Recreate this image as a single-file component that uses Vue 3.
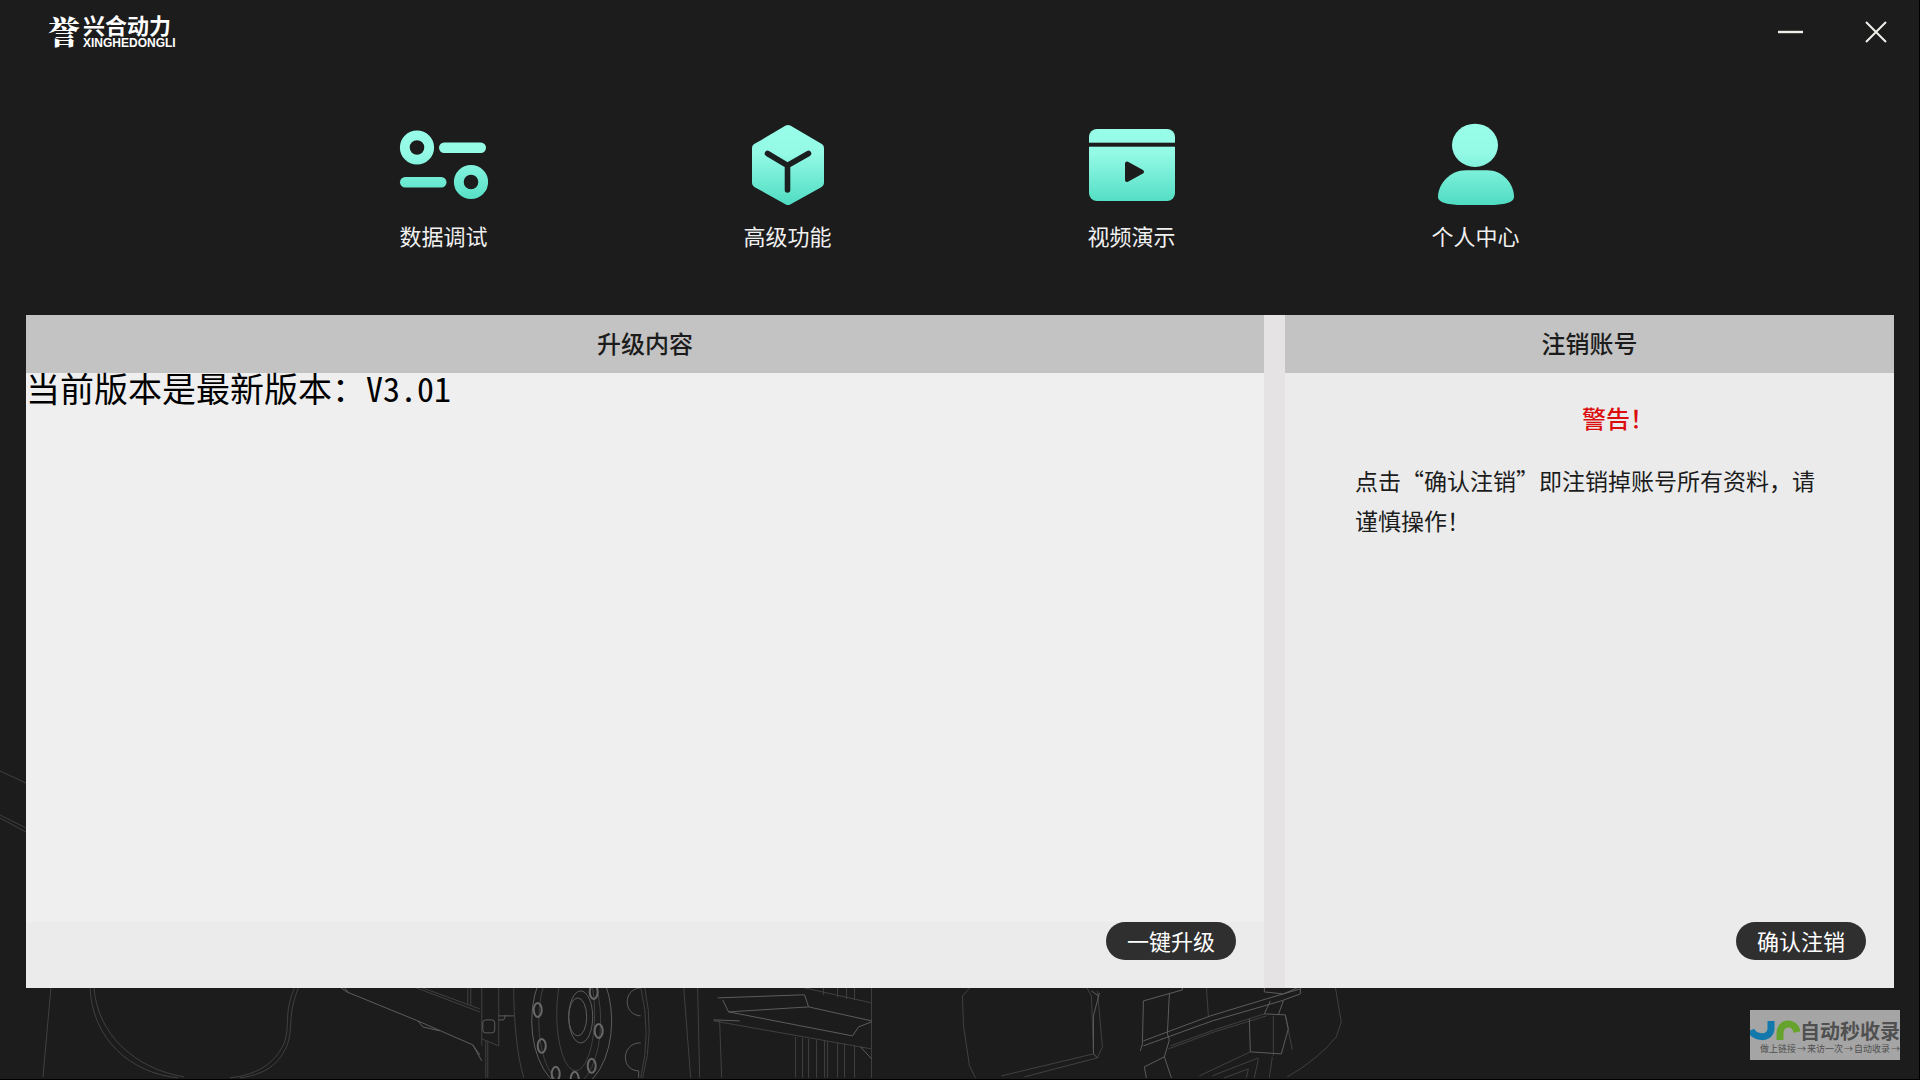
<script setup>
const bolts = [
  [594, 173], [599, 212], [592, 247], [556, 255], [542, 227], [538, 191], [575, 260],
]
const grille = [796, 803, 809, 817, 825, 828, 838, 845, 855]
const grilleTop = [824, 838, 847, 855]
const watermarkSteps = ['做上链接', '→', '来访一次', '→', '自动收录', '→']
</script>

<template>
  <div class="app">
    <svg class="truck" viewBox="0 0 1920 260" aria-hidden="true">
      <g class="faint">
        <path d="M0 -48L26 -36M0 -4L26 9M0 -1L26 13M51 168L43 258" />
        <path d="M90 168C92 220 130 254 178 259M94 168C97 216 136 250 184 258M295 168C283 196 291 206 284 225C274 246 256 256 230 259M299 168C287 196 294 208 287 227C278 248 262 256 240 259" />
        <path d="M414 168L480 193M420 168L480 190M468 168V186M471 168V186M482 168V227M499 168V227L482 220M486 222V259M488 222V259" />
        <path d="M514 168C514 200 517 236 524 259M641 168Q652 214 641 259M645 168Q655 214 643 259" />
        <ellipse cx="570" cy="202" rx="31" ry="66" />
        <ellipse cx="576" cy="195" rx="19" ry="57" />
        <path d="M684 168L691 259M698 168L700 259M714 202L872 230M720 202L722 259M872 168V259M805 169L872 184" />
        <path v-for="x in grille" :key="x" :d="`M${x} ${218 + (x - 796) / 7}V259`" />
        <path v-for="x in grilleTop" :key="'t' + x" :d="`M${x} 168V${173 + (x - 805) / 6}`" />
        <path d="M971 168L963 177L964 207L970 247L976 259M1087 168L1092 177L1094 233M1098 172L1103 228L1098 239L1025 258M1094 235L1002 257" />
        <path d="M1207 168L1209 197M1169 230L1215 213L1267 197M1171 227L1215 211L1265 195M1274 197V237M1286 196L1293 231" />
        <path d="M1336 168L1342 203L1337 218Q1318 241 1288 258" />
        <path d="M1251 233L1200 257M1259 239L1213 257M1249 250L1225 259M1249 250L1247 259M1273 238L1270 259M1259 240L1255 259" />
      </g>
      <g class="bright">
        <path d="M340 168L347 173L418 202L473 226L482 242M344 168L349 174M418 202L423 208L440 212M473 226L480 236" />
        <rect x="483" y="201" width="12" height="13" rx="3" />
        <path d="M499 197H514M499 201H504L506 196" />
        <ellipse cx="572" cy="202" rx="40" ry="68" />
        <ellipse cx="578" cy="198" rx="9" ry="19" />
        <ellipse cx="581" cy="198" rx="12" ry="26" />
        <path d="M641 169C623 170 623 196 641 197M641 224C621 224 621 252 639 252V259" />
        <path d="M714 201L740 202M718 179L801 176L805 176L809 188L872 202M723 181L729 193L853 217L859 208L872 203M729 193L809 188M861 228L872 240" />
        <path d="M1100 174L1094 197V235L1098 239M1092 172L1099 177" />
        <path d="M1183 168V171L1144 182L1143 225L1141 232M1170 175L1168 215L1170 221L1165 238L1145 248L1147 259M1165 238L1172 259" />
        <path d="M1144 222L1211 197L1267 180L1301 170M1144 227L1213 202L1282 182L1301 175V168M1265 168V173L1284 175L1300 168M1271 182L1265 195L1286 196L1289 210L1282 235L1251 233L1250 200M1284 182L1279 196" />
      </g>
      <ellipse v-for="([x, y], i) in bolts" :key="i" class="bolt" :cx="x" :cy="y" rx="4" ry="7" />
    </svg>

    <header class="titlebar">
      <div class="brand">
        <span class="emblem">誉</span>
        <div class="brand-text">
          <span class="brand-cn">兴合动力</span>
          <span class="brand-en">XINGHEDONGLI</span>
        </div>
      </div>
      <div class="window-controls">
        <button type="button" aria-label="最小化">
          <svg width="26" height="26" viewBox="0 0 26 26"><path d="M0 13H25" stroke-width="2.4" /></svg>
        </button>
        <button type="button" aria-label="关闭">
          <svg width="26" height="26" viewBox="0 0 26 26"><path d="M3 3L23 23M23 3L3 23" stroke-width="2" /></svg>
        </button>
      </div>
    </header>

    <nav class="menu">
      <a href="#data" class="menu-item">
        <svg viewBox="0 0 96 88" class="menu-icon">
          <defs>
            <linearGradient id="mint" gradientUnits="userSpaceOnUse" x1="0" y1="4" x2="0" y2="84">
              <stop offset="0" stop-color="#98fee9" />
              <stop offset="0.35" stop-color="#94fae6" />
              <stop offset="1" stop-color="#4fdcc2" />
            </linearGradient>
          </defs>
          <circle cx="21" cy="26.5" r="12.2" fill="none" stroke="url(#mint)" stroke-width="9.8" />
          <rect x="43" y="21.5" width="47" height="10.5" rx="5.2" fill="url(#mint)" />
          <circle cx="75" cy="61" r="12.2" fill="none" stroke="url(#mint)" stroke-width="9.8" />
          <rect x="4" y="56" width="46.5" height="10.5" rx="5.2" fill="url(#mint)" />
        </svg>
        <span>数据调试</span>
      </a>
      <a href="#advanced" class="menu-item">
        <svg viewBox="0 0 96 88" class="menu-icon">
          <path d="M48 8.5L79.5 27V62L48 79.5L16.500 62V27Z" fill="url(#mint)" stroke="url(#mint)" stroke-width="9" stroke-linejoin="round" />
          <path d="M27.5 32.5L47.5 44.5L68.5 32.5M47.5 44.5V69" fill="none" stroke="#1b1f1f" stroke-width="5.6" stroke-linecap="round" />
        </svg>
        <span>高级功能</span>
      </a>
      <a href="#video" class="menu-item">
        <svg viewBox="0 0 96 88" class="menu-icon">
          <rect x="5" y="8" width="86" height="72" rx="8" fill="url(#mint)" />
          <rect x="5" y="21.7" width="86" height="4" fill="#1c1c1c" />
          <path d="M43 42.5L58 50.7L43 59Z" fill="#1c1c1c" stroke="#1c1c1c" stroke-width="4" stroke-linejoin="round" />
        </svg>
        <span>视频演示</span>
      </a>
      <a href="#profile" class="menu-item">
        <svg viewBox="0 0 96 88" class="menu-icon">
          <ellipse cx="47" cy="24.3" rx="23" ry="21.6" fill="url(#mint)" />
          <path d="M38 49.3H59C75 49.3 86 63 86 76C86 82 74 84 62 84H34C22 84 10 82 10 76C10 63 22 49.3 38 49.3Z" fill="url(#mint)" />
        </svg>
        <span>个人中心</span>
      </a>
    </nav>

    <main class="panels">
      <section class="panel">
        <h2>升级内容</h2>
        <p class="version">当前版本是最新版本：V3.01</p>
        <footer><button type="button" class="pill">一键升级</button></footer>
      </section>
      <section class="panel">
        <h2>注销账号</h2>
        <div class="notice">
          <strong>警告！</strong>
          <p>点击“确认注销”即注销掉账号所有资料，请谨慎操作！</p>
        </div>
        <footer><button type="button" class="pill">确认注销</button></footer>
      </section>
    </main>

    <aside class="watermark">
      <div class="watermark-top">
        <svg width="50" height="22" viewBox="0 0 50 22" aria-hidden="true">
          <path d="M1 10C4 18 20 20 21 9V1" fill="none" stroke="#1379ad" stroke-width="7" />
          <path d="M30 20V14C30 1 45 1 47 12" fill="none" stroke="#66a32c" stroke-width="7" />
        </svg>
        <b>自动秒收录</b>
      </div>
      <div class="watermark-steps">
        <span v-for="(s, i) in watermarkSteps" :key="i">{{ s }}</span>
      </div>
    </aside>
  </div>
</template>

<style>
body {
  background: #1c1c1c;
}
</style>

<style scoped>
.app {
  position: relative;
  isolation: isolate;
  display: flex;
  flex-direction: column;
  box-sizing: border-box;
  min-height: 100vh;
  overflow: hidden;
  background: #1c1c1c;
  border-right: 1px solid #000;
  border-bottom: 1px solid #000;
  font-family: "Noto Sans CJK SC", sans-serif;
  color: #1c1c1c;
}

.truck {
  position: absolute;
  left: 0;
  bottom: 0;
  width: 100%;
  overflow: visible;
  z-index: -1;
  fill: none;
}
.faint { stroke: #404040; }
.bright { stroke: #5c5c5c; }
.bolt { stroke: #686868; stroke-width: 2; }

.titlebar {
  display: flex;
  justify-content: space-between;
  align-items: center;
  height: 64px;
  padding: 0 30px 0 48px;
}
.brand {
  display: flex;
  align-items: center;
  gap: 3px;
  padding-bottom: 4px;
  color: #fff;
}
.emblem {
  font-family: "Noto Serif CJK SC", "Noto Sans CJK SC", serif;
  font-size: 32px;
  line-height: 36px;
  font-weight: 900;
}
.brand-text {
  display: flex;
  flex-direction: column;
}
.brand-cn {
  font-size: 22px;
  line-height: 26px;
  font-weight: 700;
}
.brand-en {
  font-family: "Liberation Sans", sans-serif;
  font-size: 12px;
  line-height: 12px;
  font-weight: 700;
}
.window-controls {
  display: flex;
  gap: 59px;
}
.window-controls button {
  display: flex;
  padding: 0;
  border: 0;
  background: none;
}
.window-controls path { stroke: #efefea; }

.menu {
  display: flex;
  justify-content: center;
  padding: 57px 0 64px;
}
.menu-item {
  display: flex;
  flex-direction: column;
  align-items: center;
  gap: 10px;
  width: 344px;
  font-size: 22px;
  line-height: 32px;
  color: #f0f0f0;
  text-decoration: none;
}
.menu-icon {
  width: 96px;
  height: 88px;
}

.panels {
  flex: 1;
  display: grid;
  grid-template-columns: 1238fr 609fr;
  gap: 21px;
  margin: 0 25px 91px 26px;
  background: #e5e3e4;
}
.panel {
  display: flex;
  flex-direction: column;
  background: #ebebeb;
}
.panel h2 {
  margin: 0;
  padding-bottom: 2px;
  background: #c3c3c3;
  font-size: 24px;
  line-height: 56px;
  font-weight: 500;
  text-align: center;
}
.version {
  flex: 1;
  margin: 0;
  background: #efefef;
  font-family: "Noto Sans Mono CJK SC", "Noto Sans CJK SC", monospace;
  font-size: 34px;
  line-height: 30px;
  color: #000;
}
.notice {
  flex: 1;
  padding: 25px 70px 0;
  line-height: 40px;
}
.notice strong {
  display: block;
  padding-left: 227px;
  font-size: 24px;
  font-weight: 500;
  color: #dc0d0d;
}
.notice p {
  margin: 22px 0 0;
  font-size: 23px;
}
.panel footer {
  display: flex;
  justify-content: flex-end;
  height: 66px;
  padding-right: 28px;
}
.pill {
  width: 130px;
  height: 38px;
  padding: 0 0 2px;
  border: 0;
  border-radius: 19px;
  background: #2f2f2f;
  color: #fff;
  font-family: inherit;
  font-size: 22px;
  line-height: 36px;
}

.watermark {
  position: absolute;
  right: 19px;
  bottom: 19px;
  box-sizing: border-box;
  width: 150px;
  height: 50px;
  padding-top: 10px;
  background: #a5a5a5;
  color: #505050;
}
.watermark-top {
  display: flex;
  align-items: center;
  height: 22px;
}
.watermark-top b {
  font-size: 20px;
  line-height: 22px;
  font-weight: 700;
  white-space: nowrap;
}
.watermark-steps {
  display: flex;
  justify-content: space-between;
  padding-left: 10px;
  font-size: 9px;
  line-height: 14px;
}
</style>
